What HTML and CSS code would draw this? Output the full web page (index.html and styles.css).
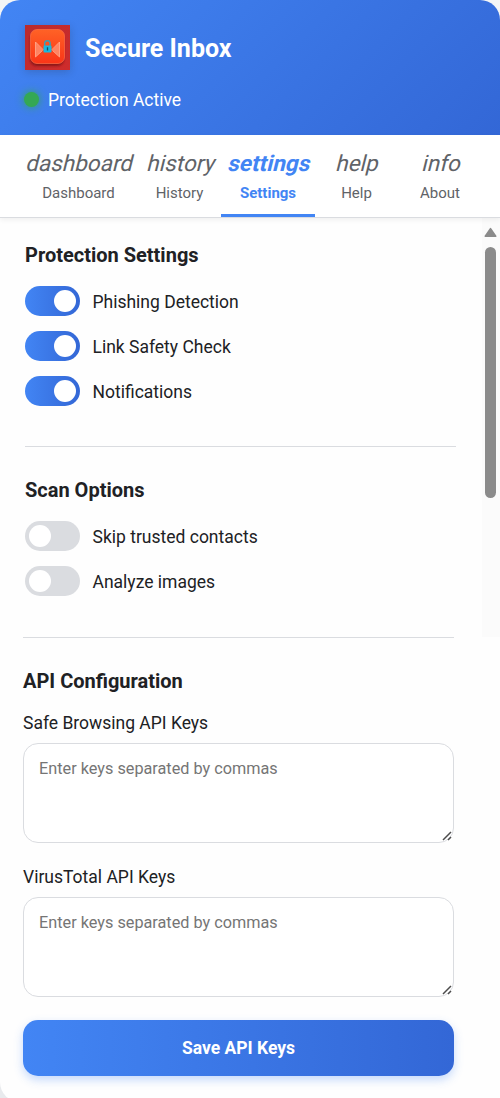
FILE: index.html
```html
<!DOCTYPE html>
<html lang="en">
<head>
<meta charset="utf-8">
<title>Secure Inbox</title>
<link rel="stylesheet" href="styles.css">
</head>
<body>
<div class="popup">
  <header class="header">
    <div class="brand">
      <svg class="logo" viewBox="0 0 45 45">
        <defs>
          <linearGradient id="tile" x1="0" y1="0" x2="0" y2="1"><stop offset="0" stop-color="#ff6226"/><stop offset="1" stop-color="#fa3517"/></linearGradient>
          <linearGradient id="back" x1="0" y1="0" x2="1" y2="1"><stop offset="0" stop-color="#b92b2d"/><stop offset="1" stop-color="#cf2c2c"/></linearGradient>
          <filter id="soft" x="-20%" y="-20%" width="150%" height="150%"><feGaussianBlur stdDeviation="1.2"/></filter>
        </defs>
        <rect width="45" height="45" fill="url(#back)"/>
        <rect x="5" y="7" width="34" height="34" rx="7" fill="#8b1419" filter="url(#soft)"/>
        <rect x="5.5" y="4.5" width="34" height="34" rx="6.5" fill="url(#tile)" stroke="#ff7048" stroke-width=".7"/>
        <path d="M10.5 17v15L18 25z" fill="#ff8361"/>
        <path d="M34.5 17v15L27 25z" fill="#ff8361"/>
        <path d="M10.5 32V17l8 8M34.5 32V17l-8 8M10.5 32l7-6.500M34.5 32l-7-6.500" fill="none" stroke="#ffad92" stroke-width=".8"/>
        <path d="M19.700 21v-2.600a2.700 2.700 0 0 1 5.400 0V21" fill="none" stroke="#3a9fb5" stroke-width="1.500"/>
        <rect x="18.500" y="20.500" width="8" height="7" rx="1" fill="#1bb8dc"/>
        <path d="M22.500 22.300v3.200" stroke="#174e69" stroke-width="1.300"/>
      </svg>
      <h1 class="title">Secure Inbox</h1>
    </div>
    <div class="status"><span class="dot"></span><span class="status-text">Protection Active</span></div>
  </header>
  <nav class="tabs">
    <button class="tab"><i class="tab-icon">dashboard</i><span class="tab-label">Dashboard</span></button>
    <button class="tab"><i class="tab-icon">history</i><span class="tab-label">History</span></button>
    <button class="tab active"><i class="tab-icon">settings</i><span class="tab-label">Settings</span></button>
    <button class="tab"><i class="tab-icon">help</i><span class="tab-label">Help</span></button>
    <button class="tab"><i class="tab-icon">info</i><span class="tab-label">About</span></button>
  </nav>
  <div class="body">
    <main class="content">
      <section class="group protection">
        <h2 class="heading">Protection Settings</h2>
        <div class="option"><span class="switch on"></span><span class="option-text">Phishing Detection</span></div>
        <div class="option"><span class="switch on"></span><span class="option-text">Link Safety Check</span></div>
        <div class="option"><span class="switch on"></span><span class="option-text">Notifications</span></div>
      </section>
      <section class="group scan">
        <h2 class="heading">Scan Options</h2>
        <div class="option"><span class="switch"></span><span class="option-text">Skip trusted contacts</span></div>
        <div class="option"><span class="switch"></span><span class="option-text">Analyze images</span></div>
      </section>
      <section class="api">
        <h2 class="heading">API Configuration</h2>
        <label class="field-label" for="sb">Safe Browsing API Keys</label>
        <div class="field">
          <textarea class="keys" id="sb" placeholder="Enter keys separated by commas"></textarea>
          <svg class="grip" viewBox="0 0 10 10"><path d="M1 9L9 1M6 9l3-3"/></svg>
        </div>
        <label class="field-label" for="vt">VirusTotal API Keys</label>
        <div class="field">
          <textarea class="keys" id="vt" placeholder="Enter keys separated by commas"></textarea>
          <svg class="grip" viewBox="0 0 10 10"><path d="M1 9L9 1M6 9l3-3"/></svg>
        </div>
        <button class="save">Save API Keys</button>
      </section>
    </main>
    <aside class="scrollbar">
      <svg class="arrow" viewBox="0 0 12 10"><path d="M6 1.500L10.800 8.500H1.200z"/></svg>
      <div class="thumb"></div>
    </aside>
  </div>
</div>
</body>
</html>
```
FILE: styles.css
```css
* { box-sizing: border-box; }
html { background: #e8eaed; overflow: hidden; }
body { margin: 0; height: 1098px; overflow: hidden; background: linear-gradient(#f3f5f6, #e8eaed); font-family: Roboto, sans-serif; color: #202124; }
h1, h2 { margin: 0; }
button { font-family: inherit; border: 0; padding: 0; }
.popup { width: 500px; height: 1102px; background: #fefefe; border-radius: 20px 20px 0 20px; overflow: hidden; }
.header { height: 135px; padding: 25px; background: linear-gradient(135deg, #4285f4, #3367d6); color: #fff; }
.brand { display: flex; align-items: center; gap: 15px; }
.logo { display: block; width: 45px; height: 45px; box-shadow: 0 2px 8px rgba(32, 33, 36, .2); }
.title { font-size: 25px; font-weight: 700; line-height: 30px; margin-top: 2px; }
.status { display: flex; align-items: center; gap: 9px; margin: 18px 0 0 -1px; height: 24px; }
.dot { width: 15px; height: 15px; margin-top: -1px; border-radius: 50%; background: #34a853; box-shadow: 0 0 8px #34a853; }
.status-text { font-size: 17.5px; }
.tabs { display: grid; grid-template-columns: 121px 81px 94px 83px 84px; height: 83px; padding-left: 19px; background: #fff; border-bottom: 1px solid #dadce0; box-shadow: 0 2px 5px rgba(0, 0, 0, .06); position: relative; }
.tab { display: flex; flex-direction: column; align-items: center; background: none; color: #5f6368; padding-top: 14px; white-space: nowrap; }
.tab.active { color: #4285f4; font-weight: 700; border-bottom: 3px solid #4285f4; }
.tab-icon { font-size: 22.5px; line-height: 28px; font-style: normal; transform: skewX(-14deg); transform-origin: 50% 79%; }
.tab-label { font-size: 15px; line-height: 18px; margin-top: 7px; }
.tab:nth-child(-n+2) .tab-icon, .tab:nth-child(-n+2) .tab-label { margin-left: -2px; }
.body { display: flex; justify-content: space-between; height: 880px; }
.content { width: 456px; padding: 24px 0 0 25px; }
.heading { font-size: 20px; font-weight: 700; line-height: 26px; }
.group { border-bottom: 1px solid #dadce0; }
.protection { height: 205px; }
.scan { height: 191px; padding-top: 30px; }
.scan, .api { margin: 0 2px 0 -2px; }
.scan .heading, .scan .option { margin-left: 2px; }
.option { display: flex; align-items: center; gap: 12.5px; height: 30px; margin-top: 15px; }
.heading + .option { margin-top: 18px; }
.switch { display: flex; align-items: center; width: 55px; height: 30px; padding: 0 4px; border-radius: 15px; background: #dadce0; }
.switch::before { content: ""; width: 22px; height: 22px; border-radius: 50%; background: #fff; }
.switch.on { justify-content: flex-end; background: linear-gradient(90deg, #4285f4, #3367d6); }
.option-text { font-size: 17.5px; line-height: 24px; padding-top: 2px; }
.api { padding-top: 30px; }
.field-label { display: block; font-size: 17.5px; line-height: 24px; margin: 17px 0 8px; }
.field { position: relative; height: 100px; }
.keys { display: block; width: 100%; height: 100px; margin: 0; padding: 14px 15px; border: 1px solid #dadce0; border-radius: 15px; resize: none; font: 16.25px/22px Roboto, sans-serif; background: #fff; }
.keys::placeholder { color: #757575; }
.field + .field-label { margin-top: 22px; }
.grip { position: absolute; right: 2px; bottom: 2px; width: 10px; height: 10px; fill: none; stroke: #4c4c4c; stroke-width: 1.5; }
.save { display: block; width: 100%; height: 56px; margin-top: 23px; border-radius: 15px; background: linear-gradient(90deg, #4285f4, #3367d6); color: #fff; font-size: 17.5px; font-weight: 700; box-shadow: 0 4px 10px rgba(66, 133, 244, .3); }
.scrollbar { width: 18px; height: 419px; padding: 9px 4px 0 3px; background: #fbfbfb; }
.arrow { display: block; width: 13px; height: 11px; margin-left: -1px; fill: #8b8b8b; stroke: #8b8b8b; stroke-width: 1.500; stroke-linejoin: round; }
.thumb { width: 11px; height: 251px; margin-top: 9px; border-radius: 6px; background: #8b8b8b; }
```
